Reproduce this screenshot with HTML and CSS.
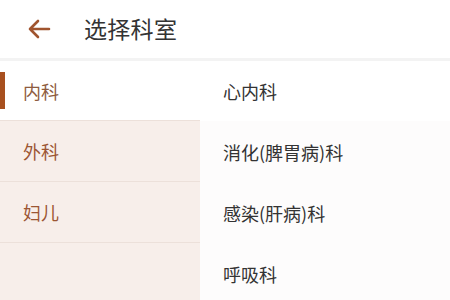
FILE: index.html
```html
<!DOCTYPE html>
<html lang="zh">
<head>
<meta charset="utf-8">
<link rel="stylesheet" href="styles.css">
</head>
<body>
<header class="topbar">
  <span class="back">
    <svg width="24" height="20" viewBox="0 0 24 20"><path d="M22 10H3M11 2L3 10l8 8" fill="none" stroke="#a0542e" stroke-width="2.6" stroke-linecap="round" stroke-linejoin="round"/></svg>
  </span>
  <h1 class="title">选择科室</h1>
</header>
<main class="body">
  <nav class="side">
    <div class="side-item active">内科</div>
    <div class="side-item">外科</div>
    <div class="side-item">妇儿</div>
  </nav>
  <ul class="list">
    <li class="row">心内科</li>
    <li class="row">消化(脾胃病)科</li>
    <li class="row">感染(肝病)科</li>
    <li class="row">呼吸科</li>
  </ul>
</main>
</body>
</html>
```
FILE: styles.css
```css
html, body { margin: 0; padding: 0; background: #fff; }
body {
  width: 450px; height: 300px; overflow: hidden;
  font-family: "Noto Sans CJK SC", "Noto Sans", sans-serif;
}
.topbar {
  height: 58px;
  border-bottom: 3px solid #f3f3f3;
  display: flex; align-items: center;
  box-sizing: content-box;
}
.back { display: flex; margin-left: 27px; width: 24px; height: 20px; margin-top: -1px; }
.title {
  margin: 0 0 0 33px; font-size: 23px; font-weight: 400; color: #333;
  letter-spacing: 0.3px; margin-top: -2px;
}
.body { display: flex; height: 239px; }
.side { width: 200px; background: #f7eeea; display: flex; flex-direction: column; }
.side-item {
  height: 61px; box-sizing: border-box; border-bottom: 1px solid #ece0da;
  display: flex; align-items: center; padding-left: 23px;
  font-size: 18px; color: #9c5634; position: relative;
}
.side-item.active { background: #fff; color: #8e5c40; height: 60px; }
.side-item.active::before {
  content: ""; position: absolute; left: 0; top: 11px; width: 5px; height: 37px; background: #a8501f;
}
.list { flex: 1; margin: 0; padding: 0; list-style: none; background: #fdfcfc; }
.row {
  height: 61px; display: flex; align-items: center; padding-left: 23px;
  font-size: 18px; color: #333;
}
.row:first-child { background: #fff; height: 60px; }
```
